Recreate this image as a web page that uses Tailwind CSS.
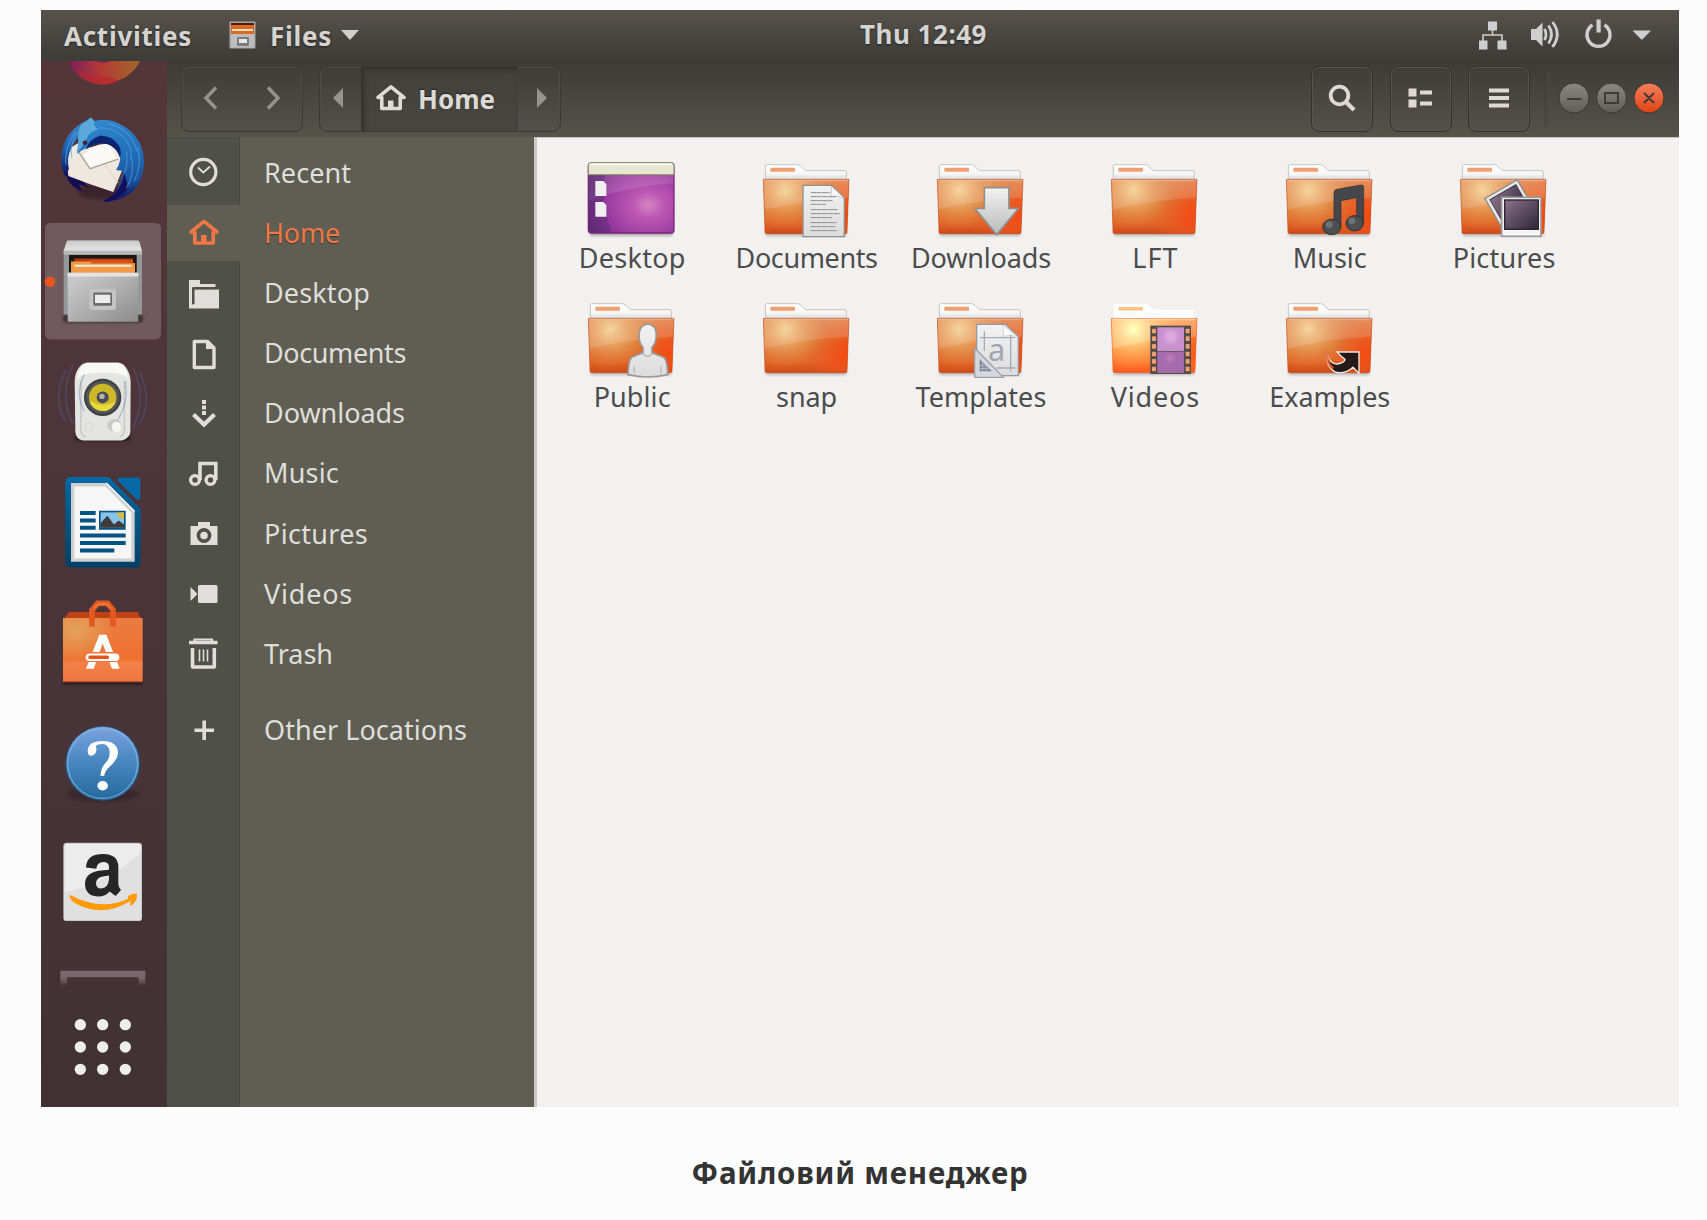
<!DOCTYPE html>
<html lang="uk">
<head>
<meta charset="utf-8">
<title>Файловий менеджер</title>
<script src="https://cdn.jsdelivr.net/npm/@tailwindcss/browser@4"></script>
</head>
<body class="bg-[#fcfcfc] w-[1707px] h-[1220px] overflow-hidden font-['Noto_Sans',sans-serif]">

<!-- shared gradients and symbols -->
<svg class="absolute w-0 h-0" aria-hidden="true">
  <defs>
    <linearGradient id="fBase" x1="0" y1="0" x2="0" y2="1"><stop offset="0" stop-color="#e0834a"/><stop offset=".45" stop-color="#dc7c36"/><stop offset=".8" stop-color="#e2652a"/><stop offset="1" stop-color="#cf4a17"/></linearGradient>
    <radialGradient id="fGlow" gradientUnits="userSpaceOnUse" cx="88" cy="100" r="120"><stop offset="0" stop-color="#f5cf92"/><stop offset=".5" stop-color="#eba765" stop-opacity=".6"/><stop offset="1" stop-color="#e08a40" stop-opacity="0"/></radialGradient>
    <radialGradient id="fRed" gradientUnits="userSpaceOnUse" cx="272" cy="175" r="130"><stop offset="0" stop-color="#f44a10"/><stop offset=".3" stop-color="#ef5018" stop-opacity=".85"/><stop offset="1" stop-color="#e8602a" stop-opacity="0"/></radialGradient>
    <linearGradient id="fTab" x1="0" y1="0" x2="0" y2="1"><stop offset="0" stop-color="#fff"/><stop offset=".6" stop-color="#f6f6f6"/><stop offset="1" stop-color="#d4d4d4"/></linearGradient>
    <linearGradient id="grey" x1="0" y1="0" x2="0" y2="1"><stop offset="0" stop-color="#f3f3f3"/><stop offset="1" stop-color="#b9b9b9"/></linearGradient>
    <linearGradient id="paper" x1="0" y1="0" x2="0" y2="1"><stop offset="0" stop-color="#f2f2f2"/><stop offset="1" stop-color="#dcdcdc"/></linearGradient>
    <linearGradient id="photo" x1="0" y1="0" x2="1" y2="1"><stop offset="0" stop-color="#8b7389"/><stop offset="1" stop-color="#2d2438"/></linearGradient>
    <radialGradient id="desk" cx=".7" cy=".6" r=".75"><stop offset="0" stop-color="#d485c0"/><stop offset=".25" stop-color="#bd57b4"/><stop offset=".65" stop-color="#9a3aa0"/><stop offset="1" stop-color="#6a2a78"/></radialGradient>
    <filter id="soft" x="-20%" y="-50%" width="140%" height="200%"><feGaussianBlur stdDeviation="4"/></filter>
    <symbol id="folder" viewBox="0 0 300 250">
      <rect x="28" y="222" width="244" height="14" rx="6" fill="#000" opacity=".28" filter="url(#soft)"/>
      <path d="M28 70V27q0-4 4-4h92q5 0 9 4l12 11q3 3 8 3h114q4 0 4 4v25z" fill="url(#fTab)" stroke="#c4c6c3" stroke-width="3"/>
      <rect x="43" y="32" width="74" height="12" rx="3" fill="#eea070"/>
      <path d="M22 68H279L273 226q-1 4-5 4H32q-4 0-5-4z" fill="url(#fBase)"/>
      <path d="M22 68H279L273 226q-1 4-5 4H32q-4 0-5-4z" fill="url(#fRed)"/>
      <path d="M22 68H279L273 226q-1 4-5 4H32q-4 0-5-4z" fill="url(#fGlow)"/>
      <path d="M22 68H279L276 122Q150 128 25 158z" fill="#fff" opacity=".14"/>
      <path d="M25 71H276" stroke="#f6c49a" stroke-width="3" opacity=".6"/>
      <path d="M22 67H279L273 226q-1 4-5 4H32q-4 0-5-4z" fill="none" stroke="#c4491c" stroke-opacity=".6" stroke-width="3"/>
    </symbol>
    <symbol id="home" viewBox="0 0 30 26"><path d="M15 1.900 2 12.400H5.800V23.500H24.200V12.400H28L15 1.900Z" fill="none" stroke="currentColor" stroke-width="3.600" stroke-linejoin="round"/><path d="M12 24V15.500h5.500V24" fill="currentColor"/></symbol>
    <linearGradient id="cabTop" x1="0" y1="0" x2="0" y2="1"><stop offset="0" stop-color="#c9c9c9"/><stop offset="1" stop-color="#e6e6e6"/></linearGradient>
    <linearGradient id="cab" x1="0" y1="0" x2="1" y2="1"><stop offset="0" stop-color="#cfcfcf"/><stop offset=".5" stop-color="#b0b0b0"/><stop offset="1" stop-color="#8b8b8b"/></linearGradient>
    <linearGradient id="fox" x1="0" y1="0" x2="1" y2="0"><stop offset="0" stop-color="#7a1e5c"/><stop offset=".45" stop-color="#b53a35"/><stop offset="1" stop-color="#a0682a"/></linearGradient>
    <linearGradient id="tb" gradientUnits="userSpaceOnUse" x1="190" y1="50" x2="240" y2="300"><stop offset="0" stop-color="#3488cc"/><stop offset=".5" stop-color="#1f6db8"/><stop offset=".8" stop-color="#1b4f9c"/><stop offset="1" stop-color="#120f5c"/></linearGradient>
    <linearGradient id="tbl" x1="0" y1="0" x2="0" y2="1"><stop offset="0" stop-color="#3a86c8"/><stop offset=".5" stop-color="#1a5fae"/><stop offset="1" stop-color="#120f5c"/></linearGradient>
    <linearGradient id="lo" x1="0" y1="0" x2="0" y2="1"><stop offset="0" stop-color="#0369a3"/><stop offset="1" stop-color="#043f63"/></linearGradient>
    <linearGradient id="bag" x1="0" y1="0" x2="0" y2="1"><stop offset="0" stop-color="#ea7c42"/><stop offset=".65" stop-color="#f0702f"/><stop offset=".7" stop-color="#f28148"/><stop offset="1" stop-color="#ee7640"/></linearGradient>
    <linearGradient id="help" x1="0" y1="0" x2="0" y2="1"><stop offset="0" stop-color="#7ba4e0"/><stop offset=".45" stop-color="#4a88c2"/><stop offset="1" stop-color="#246a9c"/></linearGradient>
    <radialGradient id="bagGlow" cx=".15" cy=".2" r=".5"><stop offset="0" stop-color="#e3a35c"/><stop offset="1" stop-color="#e3a35c" stop-opacity="0"/></radialGradient>
  </defs>
</svg>

<main class="ml-[41px] mt-[10px] w-[1638px] h-[1097px] flex flex-col bg-[#f2f1ef]">

  <!-- top panel -->
  <div class="h-[51px] shrink-0 flex items-center justify-between bg-linear-to-b from-[#57534b] to-[#3c3b37] text-[#d6d4d0] font-bold text-[26px] leading-[50px] relative">
    <div class="flex items-center h-full pl-[23px]">
      <span data-w="126" class="w-[165px] shrink-0 whitespace-nowrap [text-shadow:0_1px_2px_#222]">Activities</span>
      <svg class="w-[27px] h-[28px] mr-[14px] mb-[1px]" viewBox="0 0 27 28"><rect x=".5" y=".5" width="26" height="27" rx="1" fill="#a8a8a8"/><rect x="2" y="2" width="23" height="12" fill="#4a1c08"/><rect x="2" y="4" width="23" height="10" fill="#dd6a20"/><rect x="3" y="8" width="21" height="2" fill="#f6dcc0"/><rect x="2" y="13" width="23" height="13.500" fill="#bdbdbd"/><rect x="8" y="16" width="12" height="9" rx="1" fill="#7c7c7c"/><rect x="10" y="18" width="8" height="4" fill="#e6e6e6"/></svg>
      <span data-w="60" class="w-[71px] shrink-0 whitespace-nowrap [text-shadow:0_1px_2px_#222]">Files</span>
      <svg class="w-[18px] h-[10px] mb-[1px]" viewBox="0 0 18 10"><path d="M0 0H18L9 10Z" fill="#d3d1cd"/></svg>
    </div>
    <div class="absolute left-[819px] top-[-1px]"><span data-w="125" class="whitespace-nowrap [text-shadow:0_1px_2px_#222]">Thu 12:49</span></div>
    <svg class="w-[180px] h-[51px] mr-[20px]" viewBox="1479 10 180 51" fill="#cfcfcf">
      <path d="M1488 21.500h9v9h-9zM1478.500 40.500h9v9h-9zM1497.500 40.500h9v9h-9z"/><path d="M1492.500 30v5M1483 41v-6h19v6" fill="none" stroke="#cfcfcf" stroke-width="1.600"/>
      <path d="M1531 29h5l6.500-6.500v24L1536 40h-5z"/><path d="M1544.500 29q3 5.500 0 11M1548.500 25.500q6 9 0 18M1552.500 22q9.500 12.500 0 25" fill="none" stroke="#cfcfcf" stroke-width="2.800"/>
      <path d="M1592.500 25a11.500 11.500 0 1 0 12 0" fill="none" stroke="#cfcfcf" stroke-width="3.400"/><path d="M1596.500 19.500h4.200v13h-4.200z"/>
      <path d="M1632.500 30.500h18.500l-9.200 9.500z"/>
    </svg>
  </div>

  <div class="flex flex-1 min-h-0">
    <!-- dock -->
    <nav class="w-[126px] shrink-0 flex flex-col bg-linear-to-b from-[#543639] via-[#4a343a] to-[#413134]">
      <svg class="w-[125px] h-[40.300px] shrink-0" viewBox="0 0 375 121"><path d="M82 0Q105 56 165 69q30 5 62-9l24-10q32-20 46-50z" fill="url(#fox)"/><path d="M100 24q30 40 80 46 32 2 52-10-20-14-50-14-50 0-82-22z" fill="#b8262f" opacity=".7"/><path d="M165 0q20 10 45 0z" fill="#6c2a5a"/></svg>

      <!-- mail -->
      <svg class="w-[125px] h-[120.100px] shrink-0" viewBox="0 0 375 360">
        <ellipse cx="175" cy="272" rx="62" ry="22" fill="#20101a" opacity=".45" filter="url(#soft)"/>
        <path d="M64 190 L80 235Q96 262 124 272L114 250 146 260 118 234 84 214Z" fill="#140f55"/>
        <path d="M77 180 88 140 112 126 142 140 217 124 240 160 244 206 217 273 150 250 82 225Z" fill="#eee8de"/>
        <path d="M147 202 126 164Q160 122 204 130L230 172Z" fill="#fbf9f5"/>
        <path d="M108 146 147 203 232 174" fill="none" stroke="#aca398" stroke-width="4"/><path d="M192 192 232 246" stroke="#d8d0c4" stroke-width="3"/>
        <path d="M122 66Q62 104 61 174 60 200 72 226L84 204Q76 172 90 142 104 116 118 104Z" fill="url(#tbl)"/>
        <path d="M92 170Q84 130 112 92M74 190Q70 140 104 92" fill="none" stroke="#5aa6de" stroke-width="4" opacity=".6"/>
        <path d="M112 118Q108 84 122 66L134 60 149 49 162 60Q205 48 250 76 306 112 309 180 308 290 196 303 188 302 186 298 206 296 222 276 240 250 246 210L225 207Q242 180 237 156 228 120 192 114 166 110 148 132 138 142 122 148L108 158Q112 140 112 118Z" fill="url(#tb)"/>
        <path d="M112 122Q108 84 124 68L138 60 149 49 160 62Q156 76 172 86 144 90 134 118L118 144 108 156Z" fill="#5ba8da"/>
        <path d="M186 298Q240 280 250 216L262 262Q230 296 196 303Z" fill="#140f5c"/>
        <path d="M134 146Q146 112 176 104 214 102 234 134 242 148 238 172 226 136 196 128 164 122 134 146Z" fill="#0b2370"/>
        <path d="M170 82Q230 76 262 128 272 146 270 176M200 68Q270 84 288 150M290 140Q304 190 280 240M272 170Q282 220 256 262M256 150Q262 190 250 216" fill="none" stroke="#4fa0dc" stroke-width="4" opacity=".6"/>
        <circle cx="132" cy="125" r="7" fill="#43242a"/>
      </svg>

      <!-- file manager, running -->
      <svg class="w-[125px] h-[120.100px] shrink-0" viewBox="0 0 375 360">
        <rect x="12" y="6" width="348" height="349" rx="16" fill="#705a5d"/>
        <circle cx="27" cy="182" r="16" fill="#e95420"/>
        <rect x="66" y="280" width="240" height="24" rx="8" fill="#000" opacity=".45" filter="url(#soft)"/>
        <path d="M82 58H288Q293 58 295 62L303 88V280H68V88L77 62Q78 58 82 58Z" fill="#969798"/>
        <path d="M82 58H288Q293 58 295 62L303 90H68L77 62Q78 58 82 58Z" fill="url(#cabTop)"/>
        <path d="M68 88H303V100H68z" fill="#b9b9b9"/>
        <path d="M84 102H287V160H84z" fill="#1d1712"/>
        <path d="M100 112H276V130H100z" fill="#b23c10"/>
        <path d="M90 121H148l8 5H282V156H90z" fill="#ee9a48"/><path d="M150 117H276v10H150z" fill="#d8531b"/>
        <rect x="101" y="131" width="170" height="6" fill="#fcefdc"/>
        <path d="M80 155H292V298Q292 302 288 302H84Q80 302 80 298Z" fill="url(#cab)"/>
        <path d="M80 155H292V166H80z" fill="#e4e4e4"/>
        <rect x="145" y="203" width="80" height="64" rx="10" fill="#c4c4c4"/><rect x="157" y="214" width="56" height="40" rx="4" fill="#6a6a6a"/><rect x="162" y="221" width="46" height="25" fill="#ececec"/>
      </svg>

      <!-- music player -->
      <svg class="w-[125px] h-[120.100px] shrink-0" viewBox="0 0 375 360">
        <g fill="none" stroke="#4d66a8" stroke-width="6" opacity=".32"><path d="M96 70Q52 160 96 250M76 85Q32 165 72 240M276 80Q320 170 276 260M296 95Q336 170 296 250"/></g>
        <rect x="102" y="280" width="166" height="20" rx="10" fill="#000" opacity=".5" filter="url(#soft)"/>
        <path d="M138 64H232Q248 66 257 82 269 102 269 122L268 272Q266 292 242 298H126Q104 294 103 272L101 122Q101 98 112 82 122 66 138 64Z" fill="#e4e4e0"/>
        <path d="M140 66H230Q246 68 254 86L262 112Q245 94 185 94T108 114L116 86Q124 68 140 66Z" fill="#f8f8f6"/>
        <path d="M120 120v150q2 14 14 18M250 120v150q-2 14-14 18" stroke="#c9cac6" stroke-width="5" fill="none"/>
        <circle cx="185" cy="169" r="56" fill="#3e4042"/><circle cx="185" cy="169" r="49" fill="#55575a"/><circle cx="185" cy="169" r="41" fill="#cdb828"/><path d="M146 178a40 40 0 0 0 78 2q-38 24-78-2z" fill="#e9da3c"/><circle cx="185" cy="169" r="18" fill="#4a4b58"/><circle cx="183" cy="166" r="8" fill="#b5b5b5"/>
        <g fill="none" stroke="#5b7bc4" stroke-width="4" opacity=".4"><path d="M130 100q-30 60 0 110M252 120q14 60-24 120"/></g>
        <ellipse cx="220" cy="253" rx="21" ry="19" fill="#c9cac6"/><ellipse cx="226" cy="258" rx="14" ry="16" fill="#f6f6f4"/><rect x="133" y="246" width="22" height="24" rx="4" fill="none" stroke="#d5d6d2" stroke-width="3"/>
      </svg>

      <!-- word processor -->
      <svg class="w-[125px] h-[120.100px] shrink-0" viewBox="0 0 375 360">
        <path d="M88 45H203L299 140V302Q298 315 284 317H88Q75 316 73 302V60Q74 47 88 45Z" fill="url(#lo)"/>
        <path d="M234 46H288Q298 47 298 57V108Q297 116 287 112L230 56Q228 49 234 46Z" fill="#0569a3"/>
        <path d="M90 63H196L281 148V299H90Z" fill="#cfcfcf"/><path d="M100 73H194L271 152V289H100Z" fill="#f6f6f6"/>
        <path d="M196 63 281 148" stroke="#fff" stroke-width="4"/>
        <path d="M117 147h47v12h-47zM117 169h47v12h-47zM117 191h47v12h-47zM117 214h137v12H117zM117 237h137v12H117zM117 259h103v12H117zM174 146h80v57h-80z" fill="#055484"/>
        <path d="M179 151h70v46h-70z" fill="#88c3ec"/><path d="M228 151h21v20q-20-2-21-20z" fill="#d9bd3c"/><path d="M179 197v-14l20-22 20 26 14-12 16 12v10z" fill="#3c3c3c"/>
      </svg>

      <!-- software -->
      <svg class="w-[125px] h-[120.100px] shrink-0" viewBox="0 0 375 360">
        <rect x="66" y="290" width="240" height="18" fill="#000" opacity=".45" filter="url(#soft)"/>
        <path d="M84 90H292L294 98 303 112H67L76 100Z" fill="#bf4315"/>
        <rect x="66" y="108" width="239" height="191" fill="url(#bag)"/><rect x="66" y="108" width="239" height="191" fill="url(#bagGlow)"/>
        <path d="M66 299H305" stroke="#c7501c" stroke-width="3"/>
        <path d="M153 133V84L170 64H200L216 84V133" fill="none" stroke="#e25a22" stroke-width="17"/><path d="M160 78L172 66H198L210 78" fill="none" stroke="#f07a40" stroke-width="5"/>
        <path d="M175 158H196L236 260H213L185 184 158 260H135Z" fill="#fff"/>
        <rect x="130" y="210" width="108" height="30" rx="15" fill="#f17436"/>
        <rect x="134" y="214" width="101" height="23" rx="11.500" fill="#fff"/><rect x="142" y="220" width="62" height="11" rx="5" fill="#e8541c"/>
      </svg>

      <!-- help -->
      <svg class="w-[125px] h-[120.100px] shrink-0" viewBox="0 0 375 360">
        <ellipse cx="185" cy="276" rx="108" ry="24" fill="#1c1016" opacity=".3" filter="url(#soft)"/>
        <circle cx="185" cy="184" r="112" fill="#235c8a"/><circle cx="185" cy="183" r="109" fill="url(#help)"/><circle cx="185" cy="184" r="105" fill="none" stroke="#8fb9de" stroke-width="4" opacity=".7"/>
        <path d="M140 148Q141 117 184 117 231 118 231 153 230 172 208 192 190 208 190 222H179Q178 198 194 182 207 168 206 150 204 127 184 126 170 126 164 133 168 140 165 150 161 160 151 161 140 160 140 148Z" fill="#fff"/><ellipse cx="185" cy="251" rx="16" ry="14" fill="#fff"/>
      </svg>

      <!-- shop -->
      <svg class="w-[125px] h-[120.100px] shrink-0" viewBox="0 0 375 360">
        <rect x="67" y="62" width="236" height="235" rx="10" fill="#c9c9c9"/><rect x="70" y="65" width="230" height="229" rx="8" fill="#ececec"/><path d="M70 210Q200 190 300 90V286q0 8-8 8H78q-8 0-8-8z" fill="#e0e0e0"/>
        <path d="M135 136Q136 96 188 96 231 97 232 134V185Q232 196 240 204L224 222 206 208Q192 224 170 223 133 222 132 186 132 150 180 145L204 143V134Q203 120 188 120 168 121 166 140ZM204 160 186 163Q166 166 165 184 166 199 180 199 202 197 204 172Z" fill="#262626"/>
        <path d="M86 218Q180 268 262 230L260 222Q282 210 288 216 290 236 272 250L266 250 270 236Q180 290 100 242 82 228 86 218Z" fill="#ff9a0a"/>
      </svg>

      <!-- next item edge and app grid -->
      <svg class="w-[125px] h-[165px] shrink-0" viewBox="0 0 375 495">
        <defs><linearGradient id="edge" x1="0" y1="0" x2="0" y2="1"><stop offset="0" stop-color="#7c6a70"/><stop offset=".5" stop-color="#7c6a70" stop-opacity=".9"/><stop offset="1" stop-color="#7c6a70" stop-opacity="0"/></linearGradient></defs>
        <path d="M58 86H313V132H293V106H78V132H58Z" fill="url(#edge)"/>
        <g fill="#eeeeec"><circle cx="118" cy="248" r="17"/><circle cx="185" cy="248" r="17"/><circle cx="253" cy="248" r="17"/><circle cx="118" cy="315" r="17"/><circle cx="185" cy="315" r="17"/><circle cx="253" cy="315" r="17"/><circle cx="118" cy="382" r="17"/><circle cx="185" cy="382" r="17"/><circle cx="253" cy="382" r="17"/></g>
      </svg>
    </nav>

    <section class="flex-1 flex flex-col min-w-0">
      <!-- header bar -->
      <header class="h-[76px] shrink-0 flex items-start pt-[5px] pl-[14px] bg-linear-to-b from-[#3c3b37] to-[#56534a]">
        <div class="w-[122px] h-[66px] rounded-[8px] border border-[#3a3934] shadow-[inset_0_0_0_1px_#504e47] flex items-center justify-between px-[21px] pb-[2px]">
          <svg class="w-[15px] h-[24px]" viewBox="0 0 15 24"><path d="M13 1.500 3 12 13 22.500" fill="none" stroke="#96938c" stroke-width="3.400"/></svg>
          <svg class="w-[15px] h-[24px]" viewBox="0 0 15 24"><path d="M2 1.500 12 12 2 22.500" fill="none" stroke="#96938c" stroke-width="3.400"/></svg>
        </div>
        <div class="ml-[16px] w-[242px] h-[66px] rounded-[8px] border border-[#3a3934] shadow-[inset_0_0_0_1px_#504e47] flex items-center overflow-hidden">
          <svg class="w-[10px] h-[20px] ml-[13px] mr-[18px] mb-[2px] shrink-0" viewBox="0 0 10 20"><path d="M10 0V20L0 10Z" fill="#96938c"/></svg>
          <div class="w-[157px] shrink-0 h-full bg-linear-to-b from-[#42403b] to-[#474640] shadow-[inset_3px_3px_5px_#33322e] flex items-center pl-[15px] text-[#dedad3]">
            <svg class="w-[30px] h-[26px] shrink-0 mb-[3px] text-[#e0dcd5]"><use href="#home" width="30" height="26"/></svg>
            <span data-w="75" class="ml-[12px] font-bold text-[26px] whitespace-nowrap [text-shadow:0_-1px_1px_#222]">Home</span>
          </div>
          <svg class="w-[10px] h-[20px] ml-[19px] mb-[2px] shrink-0" viewBox="0 0 10 20"><path d="M0 0V20L10 10Z" fill="#96938c"/></svg>
        </div>
        <div class="ml-auto flex gap-[16.500px]">
          <div class="w-[62px] h-[66px] rounded-[8px] border border-[#33322e] shadow-[inset_0_0_0_1px_#56544d] flex items-center justify-center pb-[2px]"><svg class="w-[28px] h-[28px]" viewBox="0 0 28 28"><circle cx="11.500" cy="11.500" r="8.800" fill="none" stroke="#dedad3" stroke-width="3.800"/><path d="M17.500 17.500 26 26" stroke="#dedad3" stroke-width="4.200"/></svg></div>
          <div class="w-[62px] h-[66px] rounded-[8px] border border-[#33322e] shadow-[inset_0_0_0_1px_#56544d] flex items-center justify-center pb-[2px] pr-[2px]"><svg class="w-[24px] h-[20px]" viewBox="0 0 24 20" fill="#dedad3"><path d="M.5.500h8v8h-8zM.5 11.500h8v8h-8zM12 2.500h12v4H12zM12 13.500h12v4H12z"/></svg></div>
          <div class="w-[62px] h-[66px] rounded-[8px] border border-[#33322e] shadow-[inset_0_0_0_1px_#56544d] flex items-center justify-center pb-[2px]"><svg class="w-[20px] h-[20px]" viewBox="0 0 20 20" fill="#dedad3"><path d="M0 .5h20v4H0zM0 8h20v4H0zM0 15.500h20v4H0z"/></svg></div>
        </div>
        <svg class="w-[149px] h-[70px] shrink-0" viewBox="1530 66 149 70">
          <defs><linearGradient id="wb" x1="0" y1="0" x2="0" y2="1"><stop offset="0" stop-color="#8b8983"/><stop offset="1" stop-color="#5f5d57"/></linearGradient><linearGradient id="wc" x1="0" y1="0" x2="0" y2="1"><stop offset="0" stop-color="#f4805c"/><stop offset="1" stop-color="#df4314"/></linearGradient></defs>
          <path d="M1545.500 72v54" stroke="#403f3a" stroke-width="1.200"/><path d="M1548.500 72v54" stroke="#4a4943" stroke-width="1.500"/>
          <g stroke="#383733" stroke-width="1"><circle cx="1574" cy="98" r="15" fill="url(#wb)"/><circle cx="1611.500" cy="98" r="15" fill="url(#wb)"/><circle cx="1649" cy="98" r="15" fill="url(#wc)"/></g>
          <path d="M1567 99h14.500M1605 93h13v10h-13zM1644 93l10 10M1654 93l-10 10" fill="none" stroke="#3c3b37" stroke-width="2"/>
        </svg>
      </header>

      <div class="flex flex-1 min-h-0">
        <!-- sidebar -->
        <aside id="places" class="w-[367px] shrink-0 flex flex-col pt-[6px] bg-[linear-gradient(90deg,#50504a_0_72px,#464640_72px_73px,#605e52_73px)] text-[#dfdedb] text-[27px] leading-[59px]"></aside>
        <!-- files -->
        <div id="files" class="flex-1 border-l-3 border-[#c9c8c4] border-t border-t-[#c5c3bf] pt-[19px] pl-[7px] grid grid-cols-[repeat(6,174.400px)] auto-rows-[139px] content-start text-[#4c4c4c] text-[27px] leading-[35px]"></div>
      </div>
    </section>
  </div>
</main>

<p class="mt-[46px] ml-[41px] w-[1638px] text-center text-[#333] font-bold text-[29.500px] leading-[40px]"><span data-w="335" class="whitespace-nowrap">Файловий менеджер</span></p>

<script>
const S = 'fill="none" stroke="currentColor"';
const places = [
  ['Recent', 85, `<circle cx="36.300" cy="29" r="12.600" ${S} stroke-width="3.200"/><path d="M31 24.500 36.300 29.500 43 23.500" ${S} stroke-width="1.800"/>`],
  ['Home', 74, `<use href="#home" x="22" y="16.500" width="30" height="26"/>`],
  ['Desktop', 104, `<path d="M22 17H33V21H48.500V24H25.500V41H27.500V26.500H52V45.500H22Z" fill="currentColor"/><path d="M25.800 41.500V25.500H48" fill="none" stroke="#50504a" stroke-width="1.600"/>`],
  ['Documents', 140, `<path d="M27.300 18.500H40.500L47 25V44.500H27.300Z" ${S} stroke-width="3.400" stroke-linejoin="round"/><path d="M39 18v8h8.500z" fill="currentColor"/>`],
  ['Downloads', 139, `<path d="M35 17h4v4h-4zM35 22.500h4v4h-4zM35 28h4v4h-4z" fill="currentColor"/><path d="M26.500 31.500 37 41.500 47.500 31.500" ${S} stroke-width="4.200"/>`],
  ['Music', 73, `<circle cx="28" cy="37" r="4.400" ${S} stroke-width="3.400"/><circle cx="43.500" cy="37" r="4.400" ${S} stroke-width="3.400"/><path d="M33 37V20.500H48.800V37" ${S} stroke-width="3.600"/>`],
  ['Pictures', 102, `<path d="M23.500 22H31V18H43V22H50.500V41H23.500Z" fill="currentColor"/><circle cx="37" cy="31.500" r="5.600" fill="none" stroke="#50504a" stroke-width="3.600"/>`],
  ['Videos', 87, `<rect x="31" y="21" width="19.500" height="18" rx="1.500" fill="currentColor"/><path d="M23.500 23 30.500 30 23.500 37Z" fill="currentColor"/>`],
  ['Trash', 67, `<path d="M22 18.500h28.500M25.500 24V43H47.300V24" ${S} stroke-width="3.600" stroke-linejoin="round"/><path d="M27.500 18v-2.500h17.500V18" ${S} stroke-width="2.200"/><path d="M32.500 25.500v12M36.500 25.500v12M40.500 25.500v12" ${S} stroke-width="1.600"/>`],
  ['Other Locations', 201, `<path d="M27.500 30.300H47M37.200 20.500V40" ${S} stroke-width="3.600"/>`]
];
document.getElementById('places').innerHTML = places.map(([t, w, icon], i) => {
  const on = i === 1;
  return `<div class="flex h-[60.100px] shrink-0 ${on ? 'text-[#f07746] bg-[linear-gradient(#0000_2px,#605e52_2px_58px,#0000_58px)]' : ''} ${i === 9 ? 'mt-[16px]' : ''}">
    <svg class="w-[73px] h-[60px] shrink-0" viewBox="0 0 73 60">${icon}</svg>
    <span data-w="${w}" class="ml-[24px] whitespace-nowrap ${on ? '[text-shadow:0_1px_1px_#3a3933]' : ''}">${t}</span></div>`;
}).join('');

const sheet = 'M141 85H226L265 122V239H141Z';
const lines = [107,119,131,142,158,170,182,197,209,221].map((y, i) => `<path d="M164 ${y}H${[222,240,230,210,244,252,228,242,238,242][i]}"/>`).join('');
const holes = [98,121,144,167,189,212].map(y => `<rect x="144" y="${y}" width="12" height="14" rx="2"/><rect x="245" y="${y}" width="12" height="14" rx="2"/>`).join('');
const emblems = {
  Documents: `<path d="${sheet}" fill="url(#paper)" stroke="#8f8f8f" stroke-width="4"/><path d="M226 87q4 24-4 32 22-6 42 4z" fill="#fafafa" stroke="#b5b5b5" stroke-width="2"/><g stroke="#8d8d8d" stroke-width="3" stroke-dasharray="16 1">${lines}</g>`,
  Downloads: `<path d="M163 92H237V154H266L200 233 134 154H163Z" fill="url(#grey)" stroke="#8f8f8f" stroke-width="5"/>`,
  Music: `<path d="M165 108Q165 99 174 97L246 84Q254 84 254 91V198H233V122L186 131V212H165Z" fill="#45474a" stroke="#2f3032" stroke-width="2"/><ellipse cx="158" cy="210" rx="27" ry="23" fill="#4d4f50" stroke="#303132" stroke-width="3"/><ellipse cx="227" cy="199" rx="26" ry="23" fill="#4d4f50" stroke="#303132" stroke-width="3"/><circle cx="151" cy="203" r="10" fill="#8a8a8a" opacity=".6"/><circle cx="219" cy="192" r="10" fill="#8a8a8a" opacity=".6"/>`,
  Pictures: `<g transform="rotate(-30 170 145)"><rect x="116" y="90" width="112" height="112" fill="#e8e8e8" stroke="#8f8f8f" stroke-width="4"/><rect x="127" y="101" width="90" height="84" fill="url(#photo)" stroke="#4a3a52" stroke-width="3"/></g><rect x="146" y="121" width="118" height="117" fill="#f5f5f5" stroke="#9a9a9a" stroke-width="5"/><rect x="155" y="129" width="101" height="88" fill="url(#photo)" stroke="#2a2230" stroke-width="4"/>`,
  Public: `<path d="M200 84Q226 86 226 118 225 142 213 154V170Q232 178 248 184 260 192 260 236 200 250 141 236 142 192 152 184L186 170V154Q174 142 174 118 176 86 200 84Z" fill="url(#paper)" stroke="#999" stroke-width="5"/><path d="M160 232v-22M240 232v-22M186 174q14 14 28 0" stroke="#b8b8b8" stroke-width="4" fill="none"/>`,
  Templates: `<path d="M140 85H226L265 122V239H140Z" fill="url(#paper)" stroke="#979aa3" stroke-width="4"/><path d="M220 87q0 28 0 34 22-8 44 2z" fill="#fafafa" stroke="#c0c0c6" stroke-width="2"/><path d="M163 106V165M150 125H255M242 118V226M200 216H256" stroke="#a6abb8" stroke-width="4"/><text x="174" y="194" font-size="92" fill="#a0a5b4">a</text><path d="M134 156V244H220Z" fill="#d5d7df" stroke="#9da1ae" stroke-width="4"/><path d="M149 190V226H186Z" fill="#7d8194"/><path d="M158 196v32M168 206v22M148 208h24M148 218h34" stroke="#cdd0da" stroke-width="2"/>`,
  Videos: `<rect x="139" y="89" width="122" height="145" fill="#514b4b"/><rect x="160" y="94" width="80" height="71" fill="#c992cf"/><rect x="160" y="167" width="80" height="64" fill="#a56bab"/><circle cx="200" cy="122" r="20" fill="#f3cdf0" opacity=".4" filter="url(#soft)"/><circle cx="198" cy="186" r="12" fill="#d48fc8" opacity=".5" filter="url(#soft)"/><g fill="#f0a070">${holes}</g>`,
  Examples: `<path d="M143 168Q150 206 176 204 198 200 198 190L186 180 174 168H240V232L222 214Q204 232 176 230 142 222 143 168Z" fill="#241a18" stroke="#f4e9e4" stroke-width="4"/><path d="M143 166q2 38 20 52" stroke="#e0602e" stroke-width="8" fill="none" opacity=".8"/>`
};
const desktop = `<rect x="26" y="222" width="250" height="14" rx="6" fill="#000" opacity=".3" filter="url(#soft)"/><rect x="22" y="18" width="257" height="210" rx="10" fill="url(#desk)" stroke="#77237c" stroke-width="4"/><path d="M24 54H277V78Q130 90 24 132z" fill="#fff" opacity=".12"/><path d="M24 54V220q0 6 8 6h60Q60 140 70 54z" fill="#4a2a6e" opacity=".35"/><path d="M22 53V27Q22 17 32 17H268Q279 17 279 27V53Z" fill="#e6e7d2" stroke="#8e9068" stroke-width="3"/><path d="M26 22h248" stroke="#f8f8ec" stroke-width="5"/><path d="M43 72H67L76 82V117H43ZM43 135H67L76 145V179H43Z" fill="#f0f0f0"/>`;
const files = [['Desktop',105],['Documents',140],['Downloads',138],['LFT',44],['Music',72],['Pictures',101],['Public',75],['snap',59],['Templates',129],['Videos',87],['Examples',119]];
document.getElementById('files').innerHTML = files.map(([n, w]) => `<figure class="flex flex-col items-center">
  <svg class="w-[100px] h-[83.300px] shrink-0" viewBox="0 0 300 250">${n === 'Desktop' ? desktop : `<use href="#folder" width="300" height="250" class="${n === 'Videos' ? 'brightness-[1.22]' : ''}"/>` + (emblems[n] || '')}</svg>
  <figcaption class="pl-[2px]"><span data-w="${w}" class="whitespace-nowrap">${n}</span></figcaption></figure>`).join('');

function fit() {
  document.querySelectorAll('[data-w]').forEach(el => {
    el.style.letterSpacing = '0px';
    const r = document.createRange();
    r.selectNodeContents(el);
    const gap = +el.dataset.w + 2 - r.getBoundingClientRect().width;
    el.style.letterSpacing = gap / el.textContent.length + 'px';
  });
}
fit();
addEventListener('load', fit);
new ResizeObserver(fit).observe(document.body);
</script>
</body>
</html>
